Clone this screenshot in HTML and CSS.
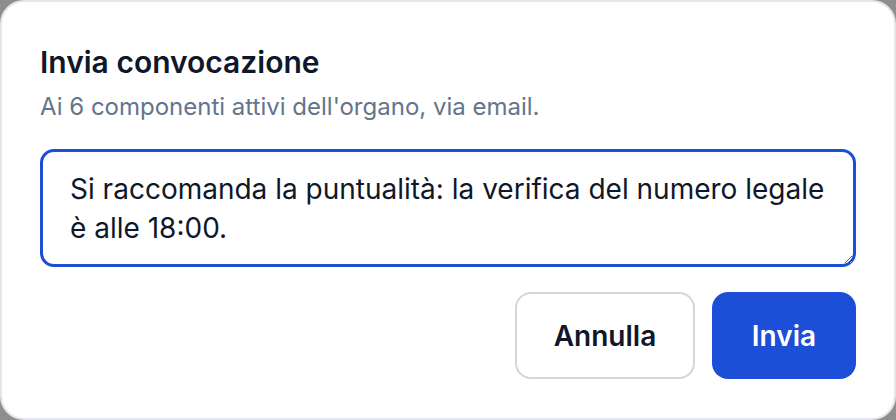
FILE: index.html
```html
<!DOCTYPE html>
<html lang="it">
<head>
    <meta charset="UTF-8">
    <meta name="viewport" content="width=device-width, initial-scale=1.0">
    <title>Invia convocazione</title>
    <link rel="stylesheet" href="styles.css">
</head>
<body>
    <div class="dialog">
        <h2 class="dialog-title">Invia convocazione</h2>
        <p class="dialog-subtitle">Ai 6 componenti attivi dell'organo, via email.</p>
        <textarea class="note-input">Si raccomanda la puntualità: la verifica del numero legale è alle 18:00.</textarea>
        <div class="dialog-actions">
            <button class="btn btn-secondary">Annulla</button>
            <button class="btn btn-primary">Invia</button>
        </div>
    </div>
</body>
</html>
```

FILE: styles.css
```css
* { margin: 0; padding: 0; box-sizing: border-box; }
body {
    font-family: Inter, 'Noto Sans', sans-serif;
    background: #8e8e8e;
    color: #0f172a;
    width: 896px;
    height: 420px;
    overflow: hidden;
}
.dialog {
    background: #fff;
    width: 896px;
    height: 420px;
    border: 2px solid #e4e5ee;
    border-radius: 24px;
    padding: 40px 38px 38px 38px;
    display: flex;
    flex-direction: column;
}
.dialog-title {
    font-size: 30px;
    font-weight: 600;
    line-height: 36px;
    margin-top: 2px;
    color: #0f172a;
}
.dialog-subtitle {
    font-size: 24px;
    line-height: 30px;
    color: #64748b;
    margin-top: 12px;
}
.note-input {
    margin-top: 27px;
    width: 100%;
    height: 118px;
    font-family: inherit;
    font-size: 28px;
    line-height: 39px;
    color: #0f172a;
    border: 3px solid #1d4ed8;
    border-radius: 14px;
    padding: 18px 24px 16px 27px;
    outline: none;
    resize: vertical;
}
.dialog-actions {
    display: flex;
    justify-content: flex-end;
    gap: 17px;
    margin-top: 25px;
}
.btn {
    font-family: inherit;
    font-size: 28px;
    font-weight: 600;
    height: 87px;
    border-radius: 16px;
    cursor: pointer;
}
.btn-secondary {
    width: 180px;
    background: #fff;
    color: #0f172a;
    border: 2px solid #cfd6e0;
}
.btn-primary {
    width: 144px;
    background: #1d4ed8;
    color: #fff;
    border: none;
}
```
